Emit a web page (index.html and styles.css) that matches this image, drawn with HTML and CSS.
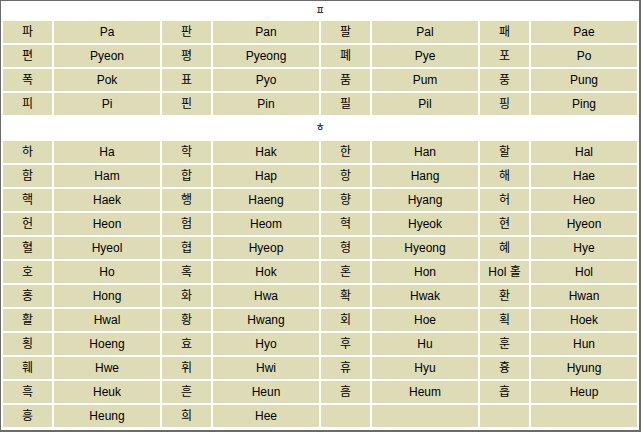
FILE: index.html
```html
<!DOCTYPE html>
<html lang="ko">
<head>
<meta charset="utf-8">
<title>Romanization</title>
<link rel="stylesheet" href="styles.css">
</head>
<body>
<div class="frame">
<table class="roman">
<colgroup>
<col class="k"><col><col class="k"><col><col class="k"><col><col class="k"><col>
</colgroup>
<tbody>
<tr class="head first"><td colspan="8">ㅍ</td></tr>
<tr><td>파</td><td>Pa</td><td>판</td><td>Pan</td><td>팔</td><td>Pal</td><td>패</td><td>Pae</td></tr>
<tr><td>편</td><td>Pyeon</td><td>평</td><td>Pyeong</td><td>폐</td><td>Pye</td><td>포</td><td>Po</td></tr>
<tr><td>폭</td><td>Pok</td><td>표</td><td>Pyo</td><td>품</td><td>Pum</td><td>풍</td><td>Pung</td></tr>
<tr><td>피</td><td>Pi</td><td>핀</td><td>Pin</td><td>필</td><td>Pil</td><td>핑</td><td>Ping</td></tr>
<tr class="head"><td colspan="8">ㅎ</td></tr>
<tr><td>하</td><td>Ha</td><td>학</td><td>Hak</td><td>한</td><td>Han</td><td>할</td><td>Hal</td></tr>
<tr><td>함</td><td>Ham</td><td>합</td><td>Hap</td><td>항</td><td>Hang</td><td>해</td><td>Hae</td></tr>
<tr><td>핵</td><td>Haek</td><td>행</td><td>Haeng</td><td>향</td><td>Hyang</td><td>허</td><td>Heo</td></tr>
<tr><td>헌</td><td>Heon</td><td>험</td><td>Heom</td><td>혁</td><td>Hyeok</td><td>현</td><td>Hyeon</td></tr>
<tr><td>혈</td><td>Hyeol</td><td>협</td><td>Hyeop</td><td>형</td><td>Hyeong</td><td>혜</td><td>Hye</td></tr>
<tr><td>호</td><td>Ho</td><td>혹</td><td>Hok</td><td>혼</td><td>Hon</td><td>Hol 홀</td><td>Hol</td></tr>
<tr><td>홍</td><td>Hong</td><td>화</td><td>Hwa</td><td>확</td><td>Hwak</td><td>환</td><td>Hwan</td></tr>
<tr><td>활</td><td>Hwal</td><td>황</td><td>Hwang</td><td>회</td><td>Hoe</td><td>획</td><td>Hoek</td></tr>
<tr><td>횡</td><td>Hoeng</td><td>효</td><td>Hyo</td><td>후</td><td>Hu</td><td>훈</td><td>Hun</td></tr>
<tr><td>훼</td><td>Hwe</td><td>휘</td><td>Hwi</td><td>휴</td><td>Hyu</td><td>흉</td><td>Hyung</td></tr>
<tr><td>흑</td><td>Heuk</td><td>흔</td><td>Heun</td><td>흠</td><td>Heum</td><td>흡</td><td>Heup</td></tr>
<tr><td>흥</td><td>Heung</td><td>희</td><td>Hee</td><td></td><td></td><td></td><td></td></tr>
</tbody>
</table>
</div>
</body>
</html>
```

FILE: styles.css
```css
html, body {
  margin: 0;
  padding: 0;
  background: #ffffff;
}

.frame {
  width: 641px;
  height: 432px;
  box-sizing: border-box;
  border: 1px solid #6b6b6b;
  border-right-width: 2px;
  border-bottom-width: 2px;
  overflow: hidden;
}

.roman {
  width: 100%;
  table-layout: fixed;
  border-collapse: separate;
  border-spacing: 2px;
  font-family: "Liberation Sans", "Noto Sans CJK KR", sans-serif;
  font-size: 12px;
  color: #000000;
}

.roman col.k {
  width: 49px;
}

.roman td {
  height: 22px;
  padding: 0;
  text-align: center;
  vertical-align: middle;
  background: #dedcb6;
  line-height: 14px;
  white-space: nowrap;
}

.roman tr.head td {
  background: #ffffff;
  font-size: 10px;
}

.roman tr.head.first td {
  height: 16px;
  line-height: 12px;
}
```
